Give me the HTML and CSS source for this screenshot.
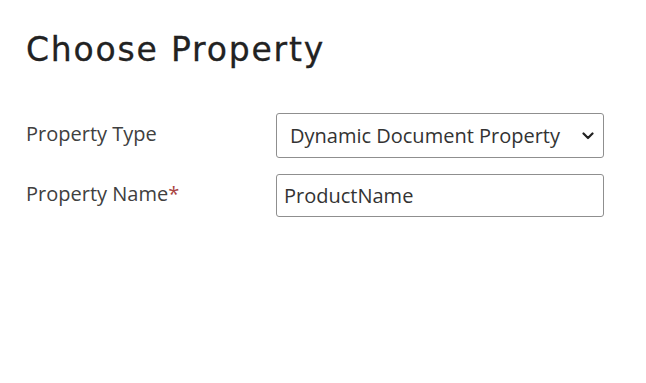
FILE: index.html
```html
<!DOCTYPE html>
<html>
<head>
<meta charset="utf-8">
<link rel="stylesheet" href="styles.css">
</head>
<body>
<div class="panel">
  <h1 class="title">Choose Property</h1>
  <div class="form">
    <div class="row">
      <label class="label">Property Type</label>
      <div class="select">
        <span class="select-text">Dynamic Document Property</span>
        <svg class="chev" width="12" height="8" viewBox="0 0 12 8"><path d="M1.5 1.5 L6 6 L10.5 1.5" fill="none" stroke="#222" stroke-width="2.2" stroke-linecap="round" stroke-linejoin="round"/></svg>
      </div>
    </div>
    <div class="row">
      <label class="label">Property Name<span class="req">*</span></label>
      <div class="input">ProductName</div>
    </div>
  </div>
</div>
</body>
</html>
```
FILE: styles.css
```css
html, body { margin: 0; padding: 0; background: #fff; }
.panel { padding: 28px 0 0 26px; }
.title {
  margin: 0;
  font-family: "DejaVu Sans", sans-serif;
  font-weight: normal;
  font-size: 33px;
  line-height: 44px;
  color: #222;
  letter-spacing: 1.8px;
  -webkit-text-stroke: 0.3px #222;
}
.form { margin-top: 41px; display: flex; flex-direction: column; gap: 16px; }
.row { display: flex; align-items: center; }
.label {
  width: 250px;
  padding-bottom: 4px;
  font-family: "Open Sans", sans-serif;
  font-size: 20px;
  color: #404040;
}
.req { color: #a94442; }
.select, .input {
  box-sizing: border-box;
  width: 328px;
  border: 1px solid #8f8f8f;
  border-radius: 3px;
  font-family: "Open Sans", sans-serif;
  font-size: 20px;
  color: #333;
  display: flex;
  align-items: center;
}
.select { height: 45px; padding: 0 9px 0 13px; justify-content: space-between; }
.input { height: 43px; padding: 0 7px; }
.chev { display: block; }
```
